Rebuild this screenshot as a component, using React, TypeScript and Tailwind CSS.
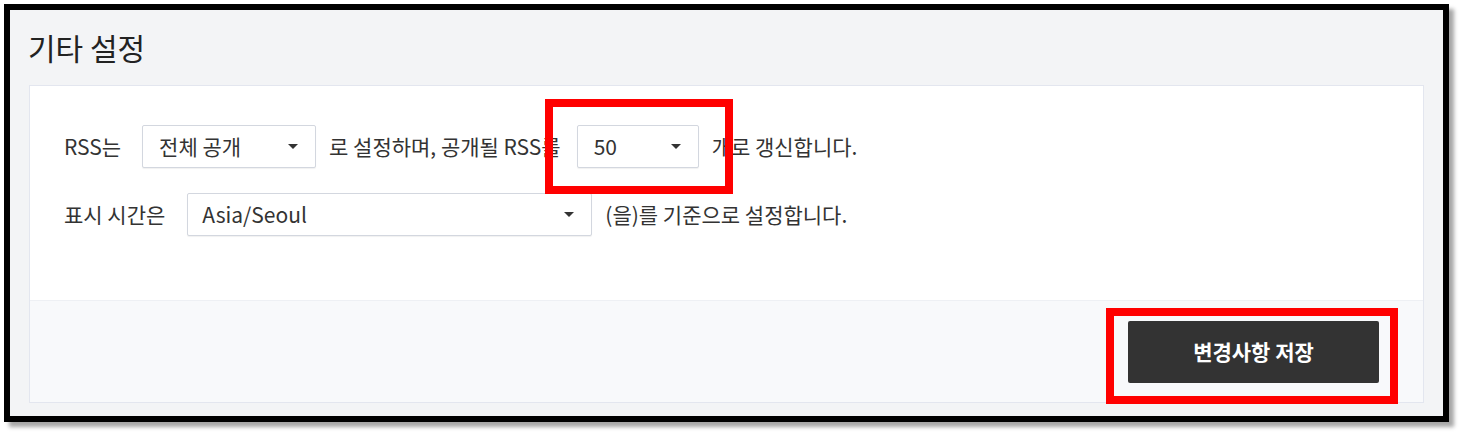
import React from 'react';

const font = { fontFamily: '"Noto Sans CJK KR", "Noto Sans", sans-serif' };

function Select({ value, width, padLeft = 'pl-4' }: { value: string; width: string; padLeft?: string }) {
  return (
    <div
      className={`flex h-[43px] items-center justify-between rounded-[2px] border border-[#d3d7df] bg-white pr-[17px] text-[21px] text-[#333] shadow-[0_1px_1px_rgba(0,0,0,0.06)] ${width} ${padLeft}`}
    >
      <span>{value}</span>
      {/* caret */}
      <svg width="10" height="5" viewBox="0 0 10 5">
        <path d="M0 0h10L5 5z" fill="#333" />
      </svg>
    </div>
  );
}

export default function App() {
  return (
    <div className="h-[435px] w-[1462px] bg-white pl-1 pt-1" style={font}>
      <div className="relative h-[418px] w-[1445px] border-[6px] border-black bg-[#f3f4f6] shadow-[5px_5px_4px_rgba(0,0,0,0.35)]">
        {/* Title */}
        <div className="flex h-[75px] items-center pl-[18px] text-[30px] text-[#222]">기타 설정</div>

        {/* Card */}
        <div className="mx-[19px] border border-[#e3e6ef] bg-white">
          <div className="flex h-[214px] flex-col gap-[25px] px-[34px] pt-[39px] text-[21px] text-[#333]">
            <div className="flex items-center gap-[13px]">
              <span className="mr-[8px]">RSS는</span>
              <Select value="전체 공개" width="w-[174px]" />
              <span className="mr-[3px]">로 설정하며, 공개될 RSS를</span>
              <Select value="50" width="w-[122px]" />
              <span>개로 갱신합니다.</span>
            </div>
            <div className="flex items-center gap-[13px]">
              <span className="mr-[9px]">표시 시간은</span>
              <Select value="Asia/Seoul" width="w-[405px]" padLeft="pl-[14px]" />
              <span>(을)를 기준으로 설정합니다.</span>
            </div>
          </div>
          <div className="flex h-[102px] items-center justify-end border-t border-[#eef0f4] bg-[#f8f9fb] pr-[44px]">
            <button className="h-[62px] w-[251px] rounded-[2px] bg-[#333333] text-[21px] font-bold text-white">
              변경사항 저장
            </button>
          </div>
        </div>

        {/* annotation boxes */}
        <div className="absolute left-[535px] top-[89px] h-[95px] w-[188px] border-[8px] border-[#ff0000]" />
        <div className="absolute left-[1096px] top-[298px] h-[96px] w-[292px] border-[8px] border-[#ff0000]" />
      </div>
    </div>
  );
}
